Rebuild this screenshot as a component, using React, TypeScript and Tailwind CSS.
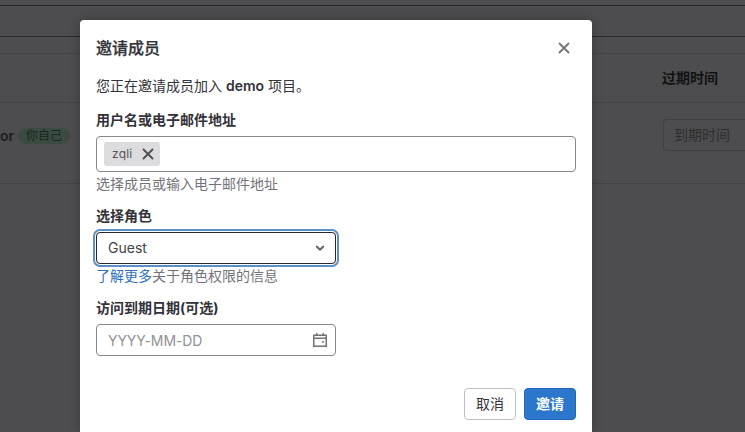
import React from 'react';

function Cross({ size, stroke }: { size: number; stroke: string }) {
  return (
    <svg width={size} height={size} viewBox="0 0 16 16" fill="none" stroke={stroke} strokeWidth="1.8" strokeLinecap="round">
      <path d="M3.5 3.5l9 9M12.5 3.5l-9 9" />
    </svg>
  );
}

function Label({ children }: { children: React.ReactNode }) {
  return <label className="mb-2 block h-4 whitespace-nowrap text-[14px] font-bold leading-4 text-[#333238]">{children}</label>;
}

function MembersPage() {
  return (
    <div className="flex h-full flex-col bg-[#4d4d4f] text-[14px]">
      <div className="h-1.5 shrink-0 border-b border-[#29292b]" />
      <div className="h-[31px] shrink-0 border-b border-[#29292b]" />
      <div className="h-[17px] shrink-0 border-b border-[#434345]" />
      <div className="flex h-[49px] shrink-0 items-center border-b border-[#434345] pb-0.5 pl-[662px] font-bold text-[#111113]">
        <span className="whitespace-nowrap">过期时间</span>
      </div>
      <div className="flex h-[81px] shrink-0 items-start justify-between border-b border-[#434345]">
        <div className="mt-[23px] flex h-5 items-center gap-[5px]">
          <span className="w-[13px] text-[14px] font-semibold leading-5 text-[#1c1c1e]">or</span>
          <span className="flex h-4 w-[52px] items-center justify-center rounded-full bg-[#3c4b42] text-[12px] text-[#14291d]">你自己</span>
        </div>
        <div className="mt-4 flex h-8 w-[82px] items-center rounded-l border border-r-0 border-[#414143] pb-0.5 pl-2.5 text-[#2d2d2f]">到期时间</div>
      </div>
    </div>
  );
}

function InviteDialog() {
  return (
    <section className="absolute left-20 top-5 flex h-[412px] w-[512px] flex-col rounded-t bg-white px-4 text-[14px] text-[#333238] shadow-[0_0_12px_rgba(0,0,0,0.25)]">
      <header className="flex h-14 items-center justify-between pr-1">
        <h1 className="text-[16px] font-medium leading-6 [-webkit-text-stroke:0.25px_#333238]">邀请成员</h1>
        <Cross size={16} stroke="#737278" />
      </header>
      <p className="h-5 whitespace-nowrap leading-5">您正在邀请成员加入 <b className="font-semibold">demo</b> 项目。</p>
      <div className="mt-4">
        <Label>用户名或电子邮件地址</Label>
        <div className="flex h-9 items-center rounded border border-[#89888d] pl-[7px]">
          <span className="flex h-6 w-14 items-center justify-between rounded-[3px] bg-[#dcdcde] pl-2 pr-1 text-[12px] tracking-[0.2px] text-[#535158]">
            zqli
            <Cross size={16} stroke="#4c4b51" />
          </span>
        </div>
        <p className="mt-0.5 h-5 leading-5 text-[#737278]">选择成员或输入电子邮件地址</p>
      </div>
      <div className="mt-[14px]">
        <Label>选择角色</Label>
        <div className="flex h-8 w-60 items-center justify-between rounded border border-[#28272d] pb-px pl-[11px] pr-[7px] text-[#434248] shadow-[0_0_0_1px_#fff,0_0_0_3px_#5a8fc9]">
          Guest
          <svg width="16" height="16" viewBox="0 0 16 16" fill="none" stroke="#626168" strokeWidth="1.8" strokeLinecap="round" strokeLinejoin="round">
            <path d="M4.75 6.5L8 9.75l3.25-3.25" />
          </svg>
        </div>
        <p className="mt-0.5 h-5 leading-5 text-[#737278]"><span className="text-[#2f72bd]">了解更多</span>关于角色权限的信息</p>
      </div>
      <div className="mt-[14px]">
        <Label>访问到期日期(可选)</Label>
        <div className="flex h-8 w-60 items-center justify-between rounded border border-[#89888d] pl-[11px] pr-[7px] text-[#929196]">
          <span className="tracking-[-0.1px]">YYYY-MM-DD</span>
          <svg width="16" height="16" viewBox="0 0 16 16" fill="none" stroke="#737278" strokeWidth="1.5">
            <path d="M1.75 3.25h12.5v11H1.75zM1.75 6.25h12.5M4.75 1v2M11.25 1v2" />
            <path d="M10 10h2" />
          </svg>
        </div>
      </div>
      <footer className="mt-8 flex justify-end gap-2">
        <button className="h-8 w-[52px] rounded border border-[#bfbfc3] pb-0.5">取消</button>
        <button className="h-8 w-[52px] rounded border border-[#2167b5] bg-[#2b77cb] pb-0.5 font-bold text-white">邀请</button>
      </footer>
    </section>
  );
}

export default function App() {
  return (
    <main className="relative h-[432px] w-[745px] overflow-hidden font-['Inter','Noto_Sans_CJK_SC',sans-serif]">
      <MembersPage />
      <InviteDialog />
    </main>
  );
}
